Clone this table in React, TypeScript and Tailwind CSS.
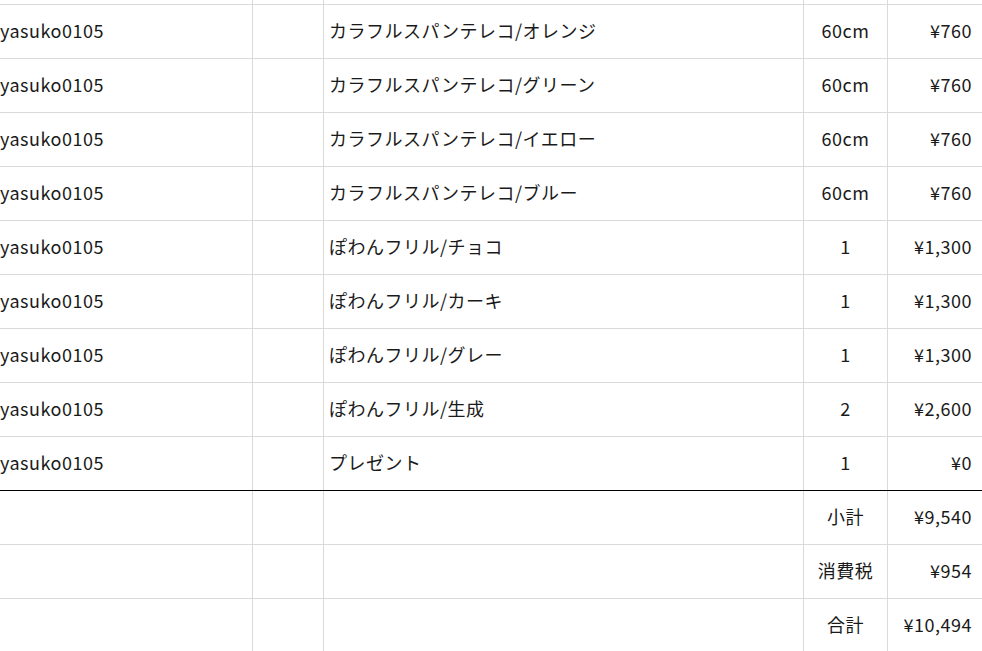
import React from "react";

type Row = { user?: string; name?: string; qty: string; price: string; thick?: boolean };

const rows: Row[] = [
  { user: "yasuko0105", name: "カラフルスパンテレコ/オレンジ", qty: "60cm", price: "¥760" },
  { user: "yasuko0105", name: "カラフルスパンテレコ/グリーン", qty: "60cm", price: "¥760" },
  { user: "yasuko0105", name: "カラフルスパンテレコ/イエロー", qty: "60cm", price: "¥760" },
  { user: "yasuko0105", name: "カラフルスパンテレコ/ブルー", qty: "60cm", price: "¥760" },
  { user: "yasuko0105", name: "ぽわんフリル/チョコ", qty: "1", price: "¥1,300" },
  { user: "yasuko0105", name: "ぽわんフリル/カーキ", qty: "1", price: "¥1,300" },
  { user: "yasuko0105", name: "ぽわんフリル/グレー", qty: "1", price: "¥1,300" },
  { user: "yasuko0105", name: "ぽわんフリル/生成", qty: "2", price: "¥2,600" },
  { user: "yasuko0105", name: "プレゼント", qty: "1", price: "¥0" },
  { qty: "小計", price: "¥9,540", thick: true },
  { qty: "消費税", price: "¥954" },
  { qty: "合計", price: "¥10,494" },
];

function Cells({ row }: { row?: Row }) {
  return (
    <>
      <div className="w-[253px] shrink-0 border-r border-[#dadada] flex items-center pb-[3px]">
        {row?.user}
      </div>
      <div className="w-[71px] shrink-0 border-r border-[#dadada]" />
      <div className="w-[480px] shrink-0 border-r border-[#dadada] flex items-center pl-[5px] pb-[3px]">
        {row?.name}
      </div>
      <div className="w-[84px] shrink-0 border-r border-[#dadada] flex items-center justify-center pb-[3px]">
        {row?.qty}
      </div>
      <div className="flex-1 flex items-center justify-end pr-[10px] pb-[3px]">{row?.price}</div>
    </>
  );
}

export default function App() {
  return (
    <div
      className="w-[982px] h-[651px] overflow-hidden bg-white text-[#1a1a1a] text-[18px] tracking-[0.5px] leading-none"
      style={{ fontFamily: '"Noto Sans CJK JP", "Noto Sans", sans-serif' }}
    >
      {/* partial row cut off at the top */}
      <div className="flex h-[4px]">
        <Cells />
      </div>
      {rows.map((r, i) => (
        <div
          key={i}
          className={`flex h-[54px] border-t ${r.thick ? "border-black" : "border-[#dadada]"}`}
        >
          <Cells row={r} />
        </div>
      ))}
    </div>
  );
}
